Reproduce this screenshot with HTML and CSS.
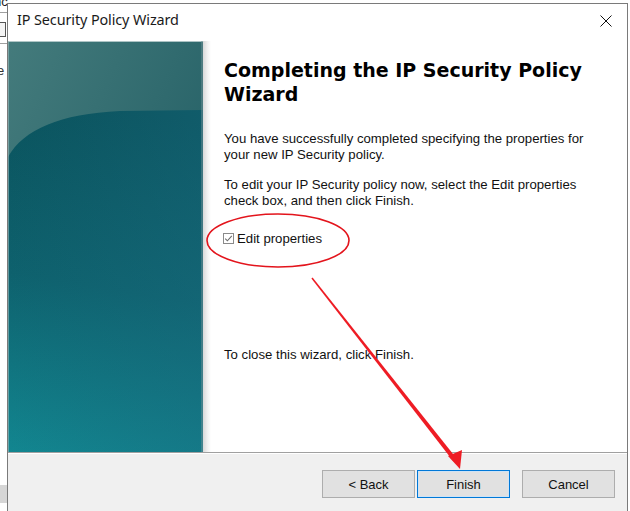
FILE: index.html
```html
<!DOCTYPE html>
<html>
<head>
<meta charset="utf-8">
<link rel="stylesheet" href="styles.css">
</head>
<body>
<div class="desktop">
  <div class="behind">
    <span class="behind-text">nc</span>
    <span class="behind-line l1"></span>
    <span class="behind-icon"></span>
    <span class="behind-line l2"></span>
    <span class="behind-e">e</span>
    <span class="behind-box"></span>
  </div>
  <div class="dialog">
    <div class="titlebar">
      <span class="title">IP Security Policy Wizard</span>
      <svg class="close" width="12" height="12" viewBox="0 0 12 12"><path d="M0.5 0.5 L11.5 11.5 M11.5 0.5 L0.5 11.5" stroke="#111" stroke-width="1" fill="none"/></svg>
    </div>
    <div class="main">
      <div class="banner">
        <svg class="art" width="195" height="411" viewBox="0 0 195 411">
          <defs>
            <linearGradient id="base" gradientUnits="userSpaceOnUse" x1="60" y1="60" x2="0" y2="411">
              <stop offset="0" stop-color="#0a525c"/>
              <stop offset="0.5" stop-color="#0e616d"/>
              <stop offset="1" stop-color="#128690"/>
            </linearGradient>
            <linearGradient id="rtint" gradientUnits="userSpaceOnUse" x1="0" y1="0" x2="195" y2="0">
              <stop offset="0" stop-color="#1c6e84" stop-opacity="0"/>
              <stop offset="1" stop-color="#1c6e84" stop-opacity="0.35"/>
            </linearGradient>
            <linearGradient id="cap" gradientUnits="userSpaceOnUse" x1="0" y1="0" x2="195" y2="90">
              <stop offset="0" stop-color="#447b7c"/>
              <stop offset="1" stop-color="#2a656a"/>
            </linearGradient>
          </defs>
          <rect width="195" height="411" fill="url(#base)"/>
          <rect width="195" height="411" fill="url(#rtint)"/>
          <path d="M0 116 C16 88 52 73 112 70 L195 69 V0 H0 Z" fill="url(#cap)"/>
          <rect x="0" y="0" width="195" height="1" fill="#dfe8e8" opacity="0.7"/>
          <rect x="0" y="0" width="1" height="411" fill="#9bb9bb" opacity="0.6"/>
          <rect x="193" y="0" width="2" height="411" fill="#6e8f95" opacity="0.5"/>
        </svg>
        <div class="shade"></div>
      </div>
      <div class="content">
        <h1 class="heading">Completing the IP Security Policy Wizard</h1>
        <p class="para p1">You have successfully completed specifying the properties for your new IP Security policy.</p>
        <p class="para p2">To edit your IP Security policy now, select the Edit properties check box, and then click Finish.</p>
        <label class="check">
          <span class="box"><svg width="9" height="9" viewBox="0 0 9 9"><path d="M1.2 4.6 L3.4 6.8 L7.8 1.8" stroke="#6d6d6d" stroke-width="1.1" fill="none"/></svg></span>
          <span>Edit properties</span>
        </label>
        <p class="para close-text">To close this wizard, click Finish.</p>
      </div>
    </div>
    <div class="footer">
      <button class="btn">&lt; Back</button>
      <button class="btn primary">Finish</button>
      <button class="btn cancel">Cancel</button>
    </div>
  </div>
  <svg class="annot" width="630" height="511" viewBox="0 0 630 511">
    <ellipse cx="278" cy="240.5" rx="71" ry="26.5" fill="none" stroke="#e3141c" stroke-width="1.6"/>
    <polygon points="311.4,278.6 312.6,277.4 457,459 453.5,461.5" fill="#ee1c24"/>
    <polygon points="448,456 462,450 460,469" fill="#ee1c24"/>
  </svg>
</div>
</body>
</html>
```
FILE: styles.css
```css
* { box-sizing: border-box; }
html, body { margin: 0; padding: 0; background: #ffffff; }
body { width: 630px; height: 511px; overflow: hidden; font-family: "Liberation Sans", Arial, sans-serif; }

.desktop { position: relative; width: 630px; height: 511px; overflow: hidden; }

.behind { position: absolute; left: 0; top: 0; width: 8px; height: 511px; }
.behind-text { position: absolute; left: -6px; top: -6px; font-size: 13px; color: #222; }
.behind-line { position: absolute; left: 0; width: 8px; height: 1px; background: #a0a0a0; }
.behind-line.l1 { top: 12px; }
.behind-line.l2 { top: 43px; }
.behind-icon { position: absolute; left: -3px; top: 22px; width: 9px; height: 15px; border: 1px solid #555; background: #f4f4f4; }
.behind-e { position: absolute; left: -3px; top: 63px; font-size: 13px; color: #333; }
.behind-box { position: absolute; left: 0; top: 485px; width: 8px; height: 18px; background: #d6d6d6; }

.dialog {
  position: absolute; left: 7px; top: 3px;
  width: 621px; height: 512px;
  border: 1px solid #7a7a7a;
  background: #ffffff;
  display: flex; flex-direction: column;
}

.titlebar {
  height: 37px; flex: none;
  display: flex; align-items: center; justify-content: space-between;
  padding: 0 15px 0 9px;
}
.title { font-family: "Noto Sans", "Open Sans", sans-serif; font-size: 14.4px; color: #1a1a1a; letter-spacing: -0.1px; position: relative; top: -3px; }
.close { margin-top: -3px; }

.main { display: flex; height: 411px; flex: none; }
.banner { display: flex; flex: none; }
.art { display: block; }
.shade { width: 8px; background: linear-gradient(to right, #d9d9d9, #f3f3f3 60%, #ffffff); }

.content { flex: 1; padding: 17px 0 0 13px; color: #111; }
.heading {
  margin: 0; width: 390px;
  font-family: "DejaVu Sans", Verdana, sans-serif; font-weight: bold;
  font-size: 19px; line-height: 24px; color: #000;
}
.para { margin: 0; font-size: 13.2px; line-height: 16px; width: 372px; }
.p1 { margin-top: 25px; }
.p2 { margin-top: 14px; }
.check { display: flex; align-items: center; gap: 3px; margin-top: 22px; font-size: 13.2px; margin-left: -1px; }
.box { width: 11px; height: 11px; border: 1px solid #8a8a8a; display: flex; align-items: center; justify-content: center; background: #fff; }
.close-text { margin-top: 101px; }

.footer {
  flex: 1;
  background: #f0f0f0;
  border-top: 1px solid #a0a0a0;
  box-shadow: inset 0 1px 0 #ffffff;
  display: flex; align-items: flex-start;
  padding: 17px 0 0 314px;
}
.btn {
  width: 93px; height: 28px;
  background: #e1e1e1; border: 1px solid #adadad;
  font-family: "Liberation Sans", Arial, sans-serif; font-size: 13px; color: #111;
  padding: 0; margin: 0 2px 0 0;
}
.btn.primary { border: 1px solid #0078d7; box-shadow: inset 0 0 0 1px #cfe3f5; }
.btn.cancel { margin-left: 10px; }

.annot { position: absolute; left: 0; top: 0; pointer-events: none; }
```
